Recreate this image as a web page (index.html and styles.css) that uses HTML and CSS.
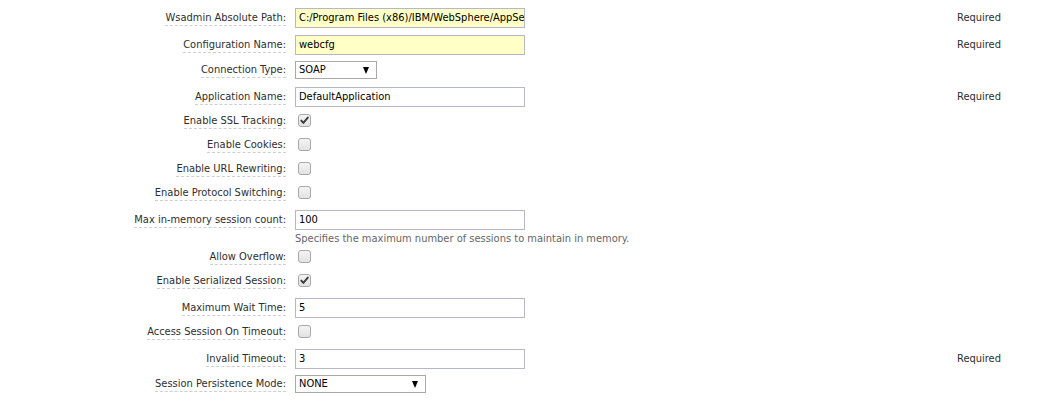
FILE: index.html
```html
<!DOCTYPE html>
<html>
<head>
<meta charset="utf-8">
<link rel="stylesheet" href="styles.css">
</head>
<body>
<div class="form">
  <div class="row r-input">
    <div class="lbl"><span>Wsadmin Absolute Path:</span></div>
    <div class="fld"><div class="inp req">C:/Program Files (x86)/IBM/WebSphere/AppServer/bin/wsadmin.bat</div></div>
    <div class="note">Required</div>
  </div>
  <div class="row r-input">
    <div class="lbl"><span>Configuration Name:</span></div>
    <div class="fld"><div class="inp req">webcfg</div></div>
    <div class="note">Required</div>
  </div>
  <div class="row r-select">
    <div class="lbl"><span>Connection Type:</span></div>
    <div class="fld"><div class="sel sel-soap">SOAP<span class="arrow"></span></div></div>
  </div>
  <div class="row r-input">
    <div class="lbl"><span>Application Name:</span></div>
    <div class="fld"><div class="inp">DefaultApplication</div></div>
    <div class="note">Required</div>
  </div>
  <div class="row r-check">
    <div class="lbl"><span>Enable SSL Tracking:</span></div>
    <div class="fld"><span class="cb checked"><svg viewBox="0 0 11 11" width="11" height="11"><path d="M2.3 5.6 L4.4 7.9 L8.8 2.6" fill="none" stroke="#3a3a3a" stroke-width="1.9" stroke-linecap="round" stroke-linejoin="round"/></svg></span></div>
  </div>
  <div class="row r-check">
    <div class="lbl"><span>Enable Cookies:</span></div>
    <div class="fld"><span class="cb"></span></div>
  </div>
  <div class="row r-check">
    <div class="lbl"><span>Enable URL Rewriting:</span></div>
    <div class="fld"><span class="cb"></span></div>
  </div>
  <div class="row r-check">
    <div class="lbl"><span>Enable Protocol Switching:</span></div>
    <div class="fld"><span class="cb"></span></div>
  </div>
  <div class="row r-input">
    <div class="lbl"><span>Max in-memory session count:</span></div>
    <div class="fld"><div class="inp">100</div></div>
  </div>
  <div class="help">Specifies the maximum number of sessions to maintain in memory.</div>
  <div class="row r-check">
    <div class="lbl"><span>Allow Overflow:</span></div>
    <div class="fld"><span class="cb"></span></div>
  </div>
  <div class="row r-check">
    <div class="lbl"><span>Enable Serialized Session:</span></div>
    <div class="fld"><span class="cb checked"><svg viewBox="0 0 11 11" width="11" height="11"><path d="M2.3 5.6 L4.4 7.9 L8.8 2.6" fill="none" stroke="#3a3a3a" stroke-width="1.9" stroke-linecap="round" stroke-linejoin="round"/></svg></span></div>
  </div>
  <div class="row r-input">
    <div class="lbl"><span>Maximum Wait Time:</span></div>
    <div class="fld"><div class="inp">5</div></div>
  </div>
  <div class="row r-check">
    <div class="lbl"><span>Access Session On Timeout:</span></div>
    <div class="fld"><span class="cb"></span></div>
  </div>
  <div class="row r-input">
    <div class="lbl"><span>Invalid Timeout:</span></div>
    <div class="fld"><div class="inp">3</div></div>
    <div class="note">Required</div>
  </div>
  <div class="row r-select">
    <div class="lbl"><span>Session Persistence Mode:</span></div>
    <div class="fld"><div class="sel sel-none">NONE<span class="arrow"></span></div></div>
  </div>
</div>
</body>
</html>
```

FILE: styles.css
```css
html, body {
  margin: 0;
  padding: 0;
  background: #ffffff;
}
body {
  font-family: "DejaVu Sans Condensed", "DejaVu Sans", sans-serif;
  font-stretch: condensed;
  font-size: 11px;
  color: #2e2e2e;
}
.form {
  padding-top: 4px;
}
.row {
  display: flex;
  align-items: center;
  box-sizing: border-box;
}
.r-input { height: 27px; }
.r-select { height: 25px; padding-bottom: 2px; }
.r-check { height: 24px; padding-bottom: 4px; }
.lbl {
  width: 286px;
  flex: none;
  text-align: right;
  margin-right: 9px;
  line-height: 13px;
}
.lbl span {
  border-bottom: 1px dashed #cfcfcf;
  padding-bottom: 1px;
}
.fld {
  width: 662px;
  flex: none;
  display: flex;
  align-items: center;
}
.note {
  color: #2e2e2e;
  line-height: 13px;
}
.inp {
  box-sizing: border-box;
  width: 230px;
  height: 20px;
  border: 1px solid #b5b8c8;
  background: #ffffff;
  color: #000000;
  padding: 0 3px;
  line-height: 18px;
  white-space: nowrap;
  overflow: hidden;
}
.inp.req {
  background: #ffffc6;
}
.sel {
  position: relative;
  box-sizing: border-box;
  height: 18px;
  border: 1px solid #a9a9a9;
  background: #ffffff;
  color: #000000;
  padding-left: 3px;
  line-height: 16px;
}
.sel-soap { width: 82px; }
.sel-none { width: 131px; }
.arrow {
  position: absolute;
  right: 7px;
  top: 5px;
  width: 0;
  height: 0;
  border-left: 3.5px solid transparent;
  border-right: 3.5px solid transparent;
  border-top: 7px solid #000000;
}
.cb {
  box-sizing: border-box;
  width: 13px;
  height: 13px;
  margin-left: 3px;
  border: 1px solid #a8a8a8;
  border-radius: 3px;
  background: linear-gradient(#f4f4f4, #e2e2e2);
  display: flex;
  align-items: center;
  justify-content: center;
}
.cb svg {
  display: block;
}
.help {
  margin-left: 295px;
  height: 13px;
  line-height: 11px;
  color: #666666;
}
```
